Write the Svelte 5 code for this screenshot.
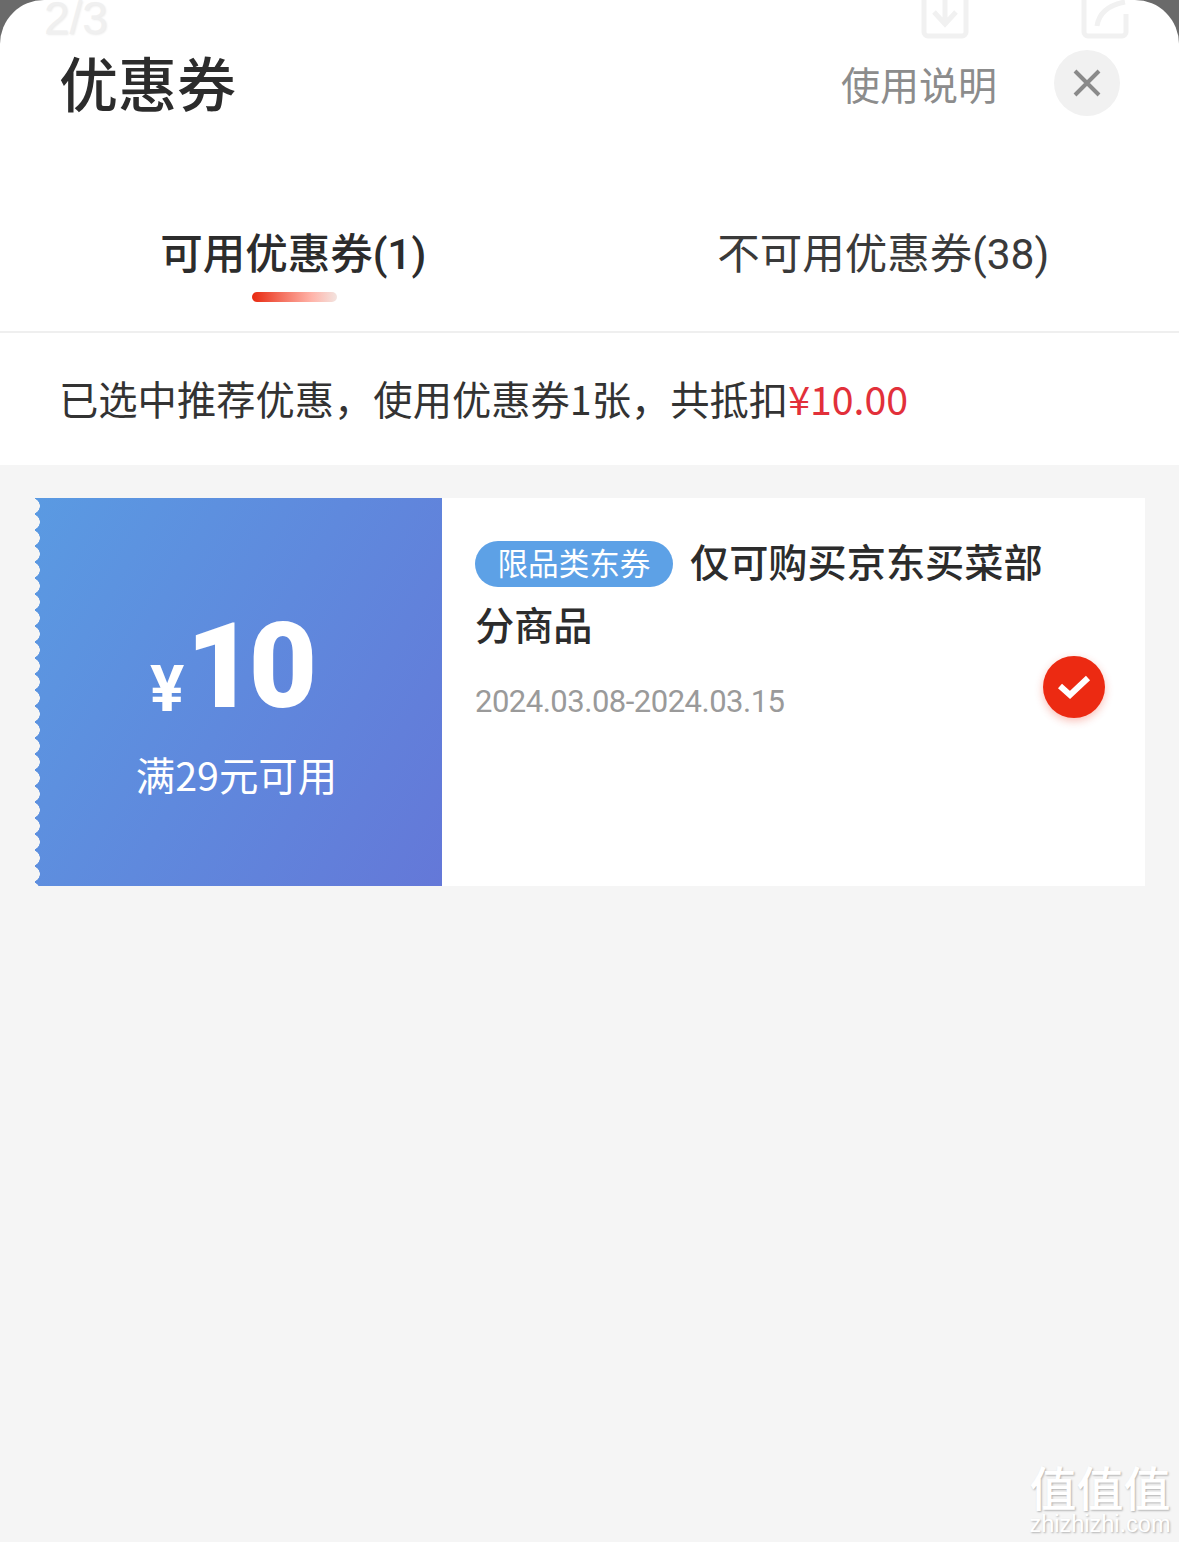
<script>
  const tabs = [
    { label: '可用优惠券(1)', active: true },
    { label: '不可用优惠券(38)', active: false }
  ];
</script>

<div class="page">
  <div class="sheet">
    <div class="viewer-count">2/3</div>
    <svg class="top-icon save" viewBox="0 0 52 40" width="52" height="40">
      <path d="M5 0V32a4 4 0 0 0 4 4H43a4 4 0 0 0 4-4V0" fill="none" stroke="#f1f1f1" stroke-width="5" />
      <path d="M26 0V22M15 12L26 24L37 12" fill="none" stroke="#f1f1f1" stroke-width="5" />
    </svg>
    <svg class="top-icon share" viewBox="0 0 52 40" width="52" height="40">
      <path d="M5 0V32a4 4 0 0 0 4 4H43a4 4 0 0 0 4-4V14" fill="none" stroke="#f1f1f1" stroke-width="5" />
      <path d="M18 26C20 12 30 5 46 2" fill="none" stroke="#f1f1f1" stroke-width="5" />
    </svg>

    <header class="header">
      <h1>优惠券</h1>
      <div class="header-right">
        <span class="help">使用说明</span>
        <button class="close" aria-label="关闭">
          <svg viewBox="0 0 28 28" width="28" height="28">
            <path d="M2 2L26 26M26 2L2 26" stroke="#8a8a8a" stroke-width="4" fill="none" />
          </svg>
        </button>
      </div>
    </header>

    <nav class="tabs">
      {#each tabs as t}
        <div class="tab" class:active={t.active}>
          <span>{t.label}</span>
          {#if t.active}<i class="bar"></i>{/if}
        </div>
      {/each}
    </nav>

    <div class="summary">已选中推荐优惠，使用优惠券1张，共抵扣<em>¥10.00</em></div>

    <main class="list">
      <article class="coupon">
        <div class="left">
          <div class="amount"><small>¥</small><b>10</b></div>
          <div class="cond">满29元可用</div>
        </div>
        <div class="right">
          <div class="title"><span class="tag">限品类东券</span>仅可购买京东买菜部分商品</div>
          <div class="date">2024.03.08-2024.03.15</div>
          <div class="check">
            <svg viewBox="0 0 34 26" width="34" height="26">
              <path d="M3 12L13 21L31 4" stroke="#fff" stroke-width="6" fill="none" />
            </svg>
          </div>
        </div>
      </article>
    </main>

    <div class="watermark">
      <div class="wm-logo">值值值</div>
      <div class="wm-url">zhizhizhi.com</div>
    </div>
  </div>
</div>

<style>
  :global(body) { margin: 0; background: #6a6a6a; }
  .page { width: 1179px; height: 1542px; overflow: hidden; font-family: "Noto Sans CJK SC", "Noto Sans", sans-serif; color: #2c2c2c; }
  .sheet { position: relative; height: 100%; background: #fff; border-radius: 44px 44px 0 0; overflow: hidden; display: flex; flex-direction: column; }

  .viewer-count { position: absolute; top: -10px; left: 44px; font: 46px/56px "Liberation Sans", sans-serif; color: #f0f0f0; text-shadow: 1px 1px 2px rgba(0, 0, 0, 0.08); }
  .top-icon { position: absolute; top: 0; }
  .save { left: 919px; }
  .share { left: 1079px; }

  .header { height: 165px; flex-shrink: 0; box-sizing: border-box; padding: 46px 59px 0 59px; display: flex; justify-content: space-between; align-items: flex-start; }
  h1 { margin: 0; font-size: 59px; line-height: 72px; font-weight: 500; }
  .header-right { display: flex; align-items: center; gap: 57px; margin-top: 4px; }
  .help { font-size: 39px; color: #8c8c8c; line-height: 66px; }
  .close { width: 66px; height: 66px; border: none; padding: 0; border-radius: 50%; background: #f1f1f1; display: flex; align-items: center; justify-content: center; }

  .tabs { height: 168px; flex-shrink: 0; box-sizing: border-box; border-bottom: 2px solid #efefef; display: flex; }
  .tab { position: relative; flex: 0 0 50%; box-sizing: border-box; padding-top: 59px; text-align: center; font-family: Roboto, "Noto Sans CJK SC", sans-serif; font-size: 42.5px; line-height: 62px; color: #3a3a3a; }
  .tab:first-child { padding-right: 3px; }
  .tab:last-child { padding-right: 2px; }
  .tab.active { font-weight: 500; color: #2c2c2c; }
  .bar { position: absolute; left: 252px; top: 127px; width: 85px; height: 10px; border-radius: 5px; background: linear-gradient(to right, #e8290f 0%, #f4715f 35%, #ffb3a8 70%, #f3e4e0 100%); }

  .summary { height: 132px; flex-shrink: 0; box-sizing: border-box; padding: 0 0 4px 59px; display: flex; align-items: center; font-size: 39.3px; color: #333; white-space: nowrap; }
  .summary em { font-style: normal; color: #e2303a; }

  .list { flex: 1; background: #f5f5f5; padding: 33px 34px 0 35px; }
  .coupon { display: flex; height: 388px; background: #fff; }
  .left {
    position: relative; width: 407px; flex-shrink: 0; box-sizing: border-box; padding-right: 4px; color: #fff; display: flex; flex-direction: column; align-items: center;
    background: linear-gradient(120deg, #5a9ae2 0%, #6478d8 100%);
  }
  .left::before {
    content: ''; position: absolute; left: 0; top: 0; bottom: 0; width: 5px;
    background: radial-gradient(circle at -3px 50%, #f5f5f5 7.5px, transparent 8px) 0 0 / 5px 16px repeat-y;
  }
  .amount { margin: 104px 12px 0 0; height: 130px; display: flex; align-items: flex-end; line-height: 1; font-family: Roboto, "Liberation Sans", sans-serif; font-weight: 700; }
  .amount small { font-size: 64px; line-height: 60px; margin-right: 2px; margin-bottom: 12px; }
  .amount b { font-size: 118px; line-height: 130px; letter-spacing: -6px; }
  .cond { margin-top: 14px; font-size: 39.4px; line-height: 56px; }

  .right { position: relative; flex: 1; padding: 31px 100px 0 33px; }
  .title { font-size: 39.2px; line-height: 63px; font-weight: 500; color: #2c2c2c; }
  .tag { display: inline-block; height: 46px; line-height: 42px; padding: 0 22.5px; margin-right: 17px; border-radius: 23px; background: #5da1e6; color: #fff; font-size: 30.6px; font-weight: 400; vertical-align: 2px; }
  .date { margin-top: 22px; font: 31px/50px Roboto, sans-serif; color: #9a9a9a; letter-spacing: -0.5px; }
  .check { position: absolute; left: 601px; top: 158px; width: 62px; height: 62px; border-radius: 50%; background: #ec2a12; box-shadow: 0 3px 8px rgba(236, 42, 18, 0.3); display: flex; align-items: center; justify-content: center; }

  .watermark { position: absolute; right: 8px; bottom: 6px; width: 142px; text-align: center; color: #fff; text-shadow: 1px 1px 2px rgba(0, 0, 0, 0.28); }
  .wm-logo { font-size: 47px; line-height: 52px; font-weight: 500; white-space: nowrap; }
  .wm-url { font: 23.5px/24px "Liberation Sans", sans-serif; }
</style>
